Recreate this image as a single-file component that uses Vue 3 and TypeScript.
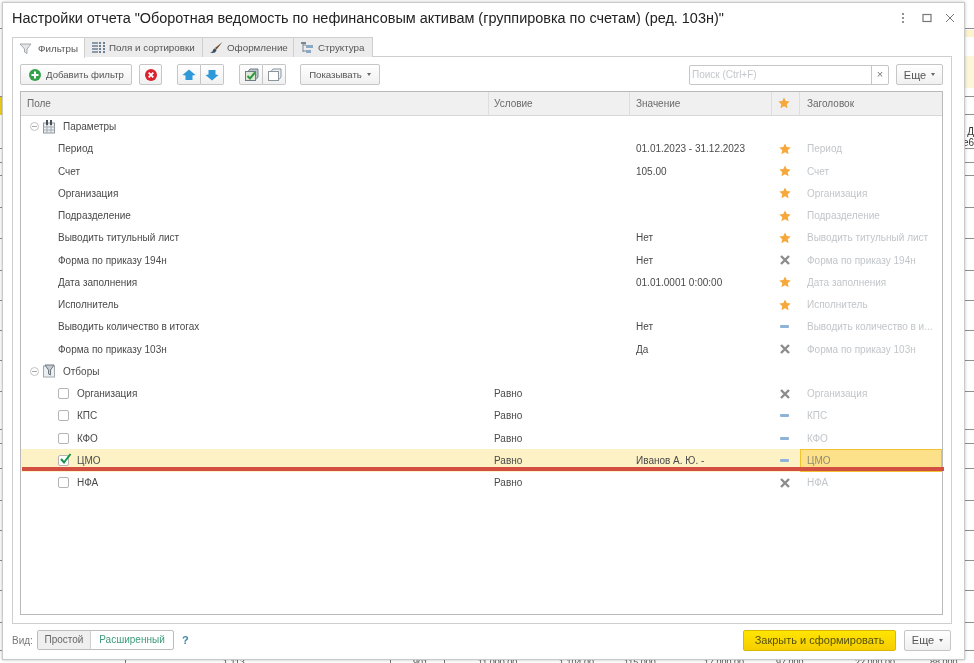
<template>
  <div class="page">
    <!-- report sheet behind the dialog -->
    <div class="sheet" aria-hidden="true">
      <div v-for="l in sheetLines" :key="l" class="sheet-line" :style="{ top: l + 'px' }" />
      <div v-for="x in sheetCols" :key="x" class="sheet-col" :style="{ left: x + 'px' }" />
      <div class="sheet-yellow" />
      <div class="sheet-strip" />
      <div class="sheet-left" />
      <span class="sheet-a">Д</span>
      <span class="sheet-b">е6</span>
      <span v-for="n in sheetNumbers" :key="n.x" class="sheet-num" :style="{ left: n.x + 'px' }">{{ n.t }}</span>
    </div>

    <div class="dialog">
      <header class="titlebar">
        <h1>Настройки отчета "Оборотная ведомость по нефинансовым активам (группировка по счетам) (ред. 103н)"</h1>
        <div class="win-btns">
          <svg class="dots" width="4" height="12" viewBox="0 0 4 12"><circle cx="2" cy="2" r="1.1" /><circle cx="2" cy="6" r="1.1" /><circle cx="2" cy="10" r="1.1" /></svg>
          <svg width="10" height="10" viewBox="0 0 10 10"><rect x="1" y="1.5" width="8" height="7" fill="none" stroke="#777" stroke-width="1.2" /></svg>
          <svg width="10" height="10" viewBox="0 0 10 10"><path d="M1 1l8 8M9 1l-8 8" stroke="#777" stroke-width="1" /></svg>
        </div>
      </header>

      <nav class="tabs">
        <div class="tab active t1">
          <svg width="13" height="13" viewBox="0 0 13 13"><path d="M1 2h11L8 7v4.5L5.500 10V7z" fill="#e4e6e8" stroke="#a4a8ac" /></svg>
          Фильтры
        </div>
        <div class="tab t2">
          <svg width="14" height="13" viewBox="0 0 14 13"><path d="M1 2h6M1 5h6M1 8h6M1 11h6" stroke="#6b7f95" stroke-width="1.500" /><path d="M9 1v11M13 1v11" stroke="#6b7f95" stroke-dasharray="2 1" stroke-width="2" /></svg>
          Поля и сортировки
        </div>
        <div class="tab t3">
          <svg width="14" height="13" viewBox="0 0 14 13"><path d="M13.500 1 6 7l1.500 1.500z" fill="#6d4a24" /><path d="M6 7.500c-2 0-2 2-2.500 3L1 11.500c3 1 6 .5 6.500-2.500z" fill="#3d4f63" /></svg>
          Оформление
        </div>
        <div class="tab t4">
          <svg width="14" height="13" viewBox="0 0 14 13"><path d="M3 1v10M3 4h3M3 10h3" stroke="#7a8794" fill="none" /><rect x="1" y="1" width="5" height="2" fill="#7a8794" /><rect x="6" y="4" width="7" height="3" fill="#8aa9c4" /><rect x="6" y="9" width="5" height="3" fill="#8aa9c4" /></svg>
          Структура
        </div>
      </nav>

      <section class="panel">
        <div class="toolbar">
          <button class="btn add">
            <svg width="14" height="14" viewBox="0 0 14 14"><circle cx="7" cy="7" r="6" fill="#35a04a" /><path d="M7 3.500v7M3.500 7h7" stroke="#fff" stroke-width="2" /></svg>
            Добавить фильтр
          </button>
          <button class="btn icon del">
            <svg width="14" height="14" viewBox="0 0 14 14"><circle cx="7" cy="7" r="6" fill="#d8232f" /><path d="m4.700 4.700 4.600 4.600M9.300 4.700l-4.600 4.600" stroke="#fff" stroke-width="1.800" /></svg>
          </button>
          <div class="group move">
            <button class="btn icon">
              <svg width="14" height="12" viewBox="0 0 14 12"><path d="M7 .5 13.500 6 10.500 6.500V11h-7V6.500L.5 6z" fill="#2f98d8" /></svg>
            </button>
            <button class="btn icon">
              <svg width="14" height="12" viewBox="0 0 14 12"><path d="M7 11.500 13.500 6 10.500 5.500V1h-7v4.500L.5 6z" fill="#2f98d8" /></svg>
            </button>
          </div>
          <div class="group checks">
            <button class="btn icon">
              <svg width="15" height="14" viewBox="0 0 15 14"><path d="M4 3.500 6 1h8v8l-2 2.500" fill="#b8c2c8" stroke="#77838b" /><rect x="1.500" y="3.500" width="10" height="9" fill="#dfe7d8" stroke="#6f7c84" /><path d="m3.500 8 2.500 2.500 5-6" fill="none" stroke="#2f9a3c" stroke-width="2" /></svg>
            </button>
            <button class="btn icon">
              <svg width="15" height="14" viewBox="0 0 15 14"><path d="M4 3.500 6 1h8v8l-2 2.500" fill="#eef0f1" stroke="#8b959c" /><rect x="1.500" y="3.500" width="10" height="9" fill="#fff" stroke="#8b959c" /></svg>
            </button>
          </div>
          <button class="btn show">Показывать <i class="caret" /></button>
          <div class="search">
            <span class="search-input">Поиск (Ctrl+F)</span>
            <span class="search-clear">×</span>
          </div>
          <button class="btn more">Еще <i class="caret" /></button>
        </div>

        <div class="table">
          <div class="row head">
            <div class="c-field">Поле</div>
            <div class="c-cond">Условие</div>
            <div class="c-val">Значение</div>
            <div class="c-star"><svg class="star" viewBox="0 0 12 12"><path :d="starPath" /></svg></div>
            <div class="c-title">Заголовок</div>
          </div>

          <div class="row">
            <div class="c-field group-cell">
              <i class="collapse" />
              <svg width="14" height="14" viewBox="0 0 14 14"><rect x="1.500" y="3" width="11" height="10" fill="#eceff1" stroke="#8f979e" /><path d="M5 3v10M9 3v10M1.500 7h11M1.500 10h11" stroke="#a5acb2" /><path d="M5 0v5M9 0v5" stroke="#47525c" stroke-width="2" /></svg>
              <span>Параметры</span>
            </div>
          </div>
          <div v-for="p in params" :key="p.name" class="row">
            <div class="c-field param">{{ p.name }}</div>
            <div class="c-cond" />
            <div class="c-val">{{ p.value }}</div>
            <div class="c-star">
              <svg v-if="p.mark === 'star'" class="star" viewBox="0 0 12 12"><path :d="starPath" /></svg>
              <svg v-else-if="p.mark === 'x'" class="cross" viewBox="0 0 10 10"><path d="m1 1 8 8M9 1 1 9" /></svg>
              <i v-else class="dash" />
            </div>
            <div class="c-title dim">{{ p.title || p.name }}</div>
          </div>

          <div class="row">
            <div class="c-field group-cell">
              <i class="collapse" />
              <svg width="14" height="14" viewBox="0 0 14 14"><rect x="1.500" y="2" width="11" height="11" fill="#eceff1" stroke="#a0a7ad" /><path d="M3 1h9L8.500 6v5L6.500 10V6z" fill="#c6ccd1" stroke="#6f7982" /></svg>
              <span>Отборы</span>
            </div>
          </div>
          <div v-for="f in filters" :key="f.name" class="row" :class="{ selected: f.on }">
            <div class="c-field filter">
              <span class="check">
                <svg v-if="f.on" width="13" height="12" viewBox="0 0 13 12"><path d="m2 6 3 3.500L11.500 1" fill="none" stroke="#139447" stroke-width="2" /></svg>
              </span>
              {{ f.name }}
            </div>
            <div class="c-cond">Равно</div>
            <div class="c-val">{{ f.value }}</div>
            <div class="c-star">
              <svg v-if="f.mark === 'x'" class="cross" viewBox="0 0 10 10"><path d="m1 1 8 8M9 1 1 9" /></svg>
              <i v-else class="dash" />
            </div>
            <div class="c-title dim" :class="{ current: f.on }">{{ f.name }}</div>
          </div>
          <div class="red-mark" />
        </div>
      </section>

      <footer class="footer">
        <span class="vid">Вид:</span>
        <div class="switch">
          <span class="sw-off">Простой</span>
          <span class="sw-on">Расширенный</span>
        </div>
        <span class="help">?</span>
        <button class="btn primary">Закрыть и сформировать</button>
        <button class="btn more">Еще <i class="caret" /></button>
      </footer>
    </div>
  </div>
</template>

<script setup lang="ts">
type Mark = 'star' | 'x' | 'dash'

const starPath = 'M6 .4l1.700 3.700 4 .4-3 2.700.9 4L6 9.200 2.400 11.200l.9-4-3-2.700 4-.4z'

const params: { name: string; value: string; mark: Mark; title?: string }[] = [
  { name: 'Период', value: '01.01.2023 - 31.12.2023', mark: 'star' },
  { name: 'Счет', value: '105.00', mark: 'star' },
  { name: 'Организация', value: '', mark: 'star' },
  { name: 'Подразделение', value: '', mark: 'star' },
  { name: 'Выводить титульный лист', value: 'Нет', mark: 'star' },
  { name: 'Форма по приказу 194н', value: 'Нет', mark: 'x' },
  { name: 'Дата заполнения', value: '01.01.0001 0:00:00', mark: 'star' },
  { name: 'Исполнитель', value: '', mark: 'star' },
  { name: 'Выводить количество в итогах', value: 'Нет', mark: 'dash', title: 'Выводить количество в и...' },
  { name: 'Форма по приказу 103н', value: 'Да', mark: 'x' },
]

const filters: { name: string; value: string; mark: Mark; on?: boolean }[] = [
  { name: 'Организация', value: '', mark: 'x' },
  { name: 'КПС', value: '', mark: 'dash' },
  { name: 'КФО', value: '', mark: 'dash' },
  { name: 'ЦМО', value: 'Иванов А. Ю. -', mark: 'dash', on: true },
  { name: 'НФА', value: '', mark: 'x' },
]

const sheetLines = [28, 96, 114, 148, 162, 175, 207, 238, 270, 300, 330, 360, 391, 429, 443, 468, 500, 530, 560, 590, 622, 650]
const sheetCols = [125, 390, 444]
const sheetNumbers = [
  { x: 223, t: '1 113' },
  { x: 413, t: '901' },
  { x: 478, t: '11 000,00' },
  { x: 559, t: '1 104,00' },
  { x: 624, t: '115 000' },
  { x: 704, t: '17 000,00' },
  { x: 776, t: '97 000' },
  { x: 855, t: '22 000,00' },
  { x: 930, t: '88 000' },
]
</script>

<style>
html, body { margin: 0; background: #fff; }
</style>

<style scoped>
.page {
  position: relative;
  width: 974px;
  height: 663px;
  overflow: hidden;
  background: #fff;
  font-family: "Liberation Sans", Arial, sans-serif;
  font-size: 10px;
  color: #4a4a4a;
  filter: blur(0.35px);
}

/* ── sheet behind ── */
.sheet { position: absolute; inset: 0; }
.sheet-line { position: absolute; left: 0; right: 0; height: 1px; background: #8f8f8f; }
.sheet-col { position: absolute; top: 640px; bottom: 0; width: 1px; background: #777; }
.sheet-yellow { position: absolute; right: 0; top: 56px; width: 12px; height: 32px; background: #fdf6d8; }
.sheet-strip { position: absolute; right: 0; top: 30px; width: 12px; height: 7px; background: #fdf3cf; }
.sheet-left { position: absolute; left: 0; top: 97px; width: 3px; height: 18px; background: #f2d21a; }
.sheet-a { position: absolute; right: 0; top: 126px; font-size: 10px; line-height: 11px; color: #333; }
.sheet-b { position: absolute; right: 0; top: 138px; font-size: 10px; line-height: 10px; color: #333; }
.sheet-num { position: absolute; top: 657px; font-size: 9px; color: #555; }

/* ── dialog ── */
.dialog {
  position: absolute;
  left: 2px;
  top: 2px;
  width: 963px;
  height: 658px;
  box-sizing: border-box;
  background: #fff;
  border: 1px solid #c9c9c9;
  box-shadow: 0 0 3px rgba(0, 0, 0, .25);
  display: flex;
  flex-direction: column;
  padding: 0 9px;
}

.titlebar {
  height: 30px;
  display: flex;
  align-items: center;
  justify-content: space-between;
  flex: none;
}
.titlebar h1 {
  margin: 0;
  font-size: 14.450px;
  font-weight: 400;
  color: #222;
  white-space: nowrap;
}
.win-btns {
  display: flex;
  align-items: center;
  gap: 13px;
}
.win-btns svg { fill: #777; display: block; }
.win-btns .dots { margin-right: 4px; }

/* ── tabs ── */
.tabs {
  display: flex;
  flex: none;
  height: 20px;
  margin-top: 4px;
  position: relative;
  z-index: 1;
}
.tab {
  box-sizing: border-box;
  display: flex;
  align-items: center;
  gap: 4px;
  padding-left: 6px;
  border: 1px solid #cfcfcf;
  border-bottom: none;
  border-left: none;
  background: #ececec;
  color: #555;
  font-size: 9.800px;
  white-space: nowrap;
}
.t1 { width: 73px; }
.t2 { width: 118px; }
.t3 { width: 91px; }
.t4 { width: 79px; }
.tab.active {
  background: #fff;
  border-left: 1px solid #cfcfcf;
  height: 21px;
  gap: 6px;
}

/* ── panel ── */
.panel {
  flex: none;
  box-sizing: border-box;
  width: 940px;
  height: 568px;
  margin-top: -1px;
  border: 1px solid #cfcfcf;
  padding: 7px 8px 8px 7px;
  display: flex;
  flex-direction: column;
  gap: 6px;
}
.toolbar {
  display: flex;
  align-items: center;
  height: 21px;
  flex: none;
}
.btn {
  box-sizing: border-box;
  height: 21px;
  border: 1px solid #c6c6c6;
  border-radius: 2px;
  background: linear-gradient(#fff, #f0f0f0);
  font: inherit;
  font-size: 9.600px;
  color: #555;
  display: inline-flex;
  align-items: center;
  justify-content: center;
  padding: 0;
}
.btn.add { width: 112px; gap: 4px; }
.btn.icon { width: 23px; }
.btn.del { margin-left: 7px; }
.group { display: flex; }
.group .btn { border-radius: 0; width: 24px; }
.group .btn + .btn { border-left: none; width: 23px; }
.group .btn:first-child { border-radius: 2px 0 0 2px; }
.group .btn:last-child { border-radius: 0 2px 2px 0; }
.group.move { margin-left: 15px; }
.group.checks { margin-left: 15px; }
.btn.show { width: 80px; margin-left: 14px; gap: 5px; }
.btn.more { width: 47px; gap: 5px; font-size: 11px; }
.caret {
  width: 0;
  height: 0;
  border-left: 2.500px solid transparent;
  border-right: 2.500px solid transparent;
  border-top: 3px solid #666;
}
.search {
  margin-left: auto;
  margin-right: 7px;
  width: 200px;
  height: 20px;
  box-sizing: border-box;
  border: 1px solid #c6c6c6;
  border-radius: 2px;
  display: flex;
}
.search-input {
  flex: 1;
  padding-left: 2px;
  line-height: 18px;
  color: #c4c8cc;
  border-right: 1px solid #c6c6c6;
}
.search-clear {
  width: 16px;
  text-align: center;
  line-height: 17px;
  color: #777;
  font-size: 11px;
}

/* ── table ── */
.table {
  position: relative;
  flex: 1;
  min-height: 0;
  border: 1px solid #b9b9b9;
  display: flex;
  flex-direction: column;
}
.row {
  display: grid;
  grid-template-columns: 468px 141px 142px 28px 1fr;
  height: 22.250px;
  flex: none;
  align-items: center;
}
.row.head {
  height: 23.500px;
  background: #f0f0f0;
  border-bottom: 1px solid #d8d8d8;
  box-sizing: border-box;
  color: #6a6a6a;
}
.row.head > div {
  height: 100%;
  display: flex;
  align-items: center;
  border-right: 1px solid #dedede;
  box-sizing: border-box;
}
.row.head > div:last-child { border-right: none; }
.c-field { padding-left: 6px; white-space: nowrap; }
.c-cond { padding-left: 5px; }
.c-val { padding-left: 6px; white-space: nowrap; }
.c-star {
  display: flex;
  align-items: center;
  justify-content: center;
  height: 100%;
  padding-right: 3px;
}
.c-title { padding-left: 7px; white-space: nowrap; overflow: hidden; }
.dim { color: #c2c6ca; }
.group-cell {
  grid-column: 1 / -1;
  display: flex;
  align-items: center;
  padding-left: 9px;
}
.group-cell svg { margin-left: 3px; }
.group-cell span { margin-left: 7px; }
.collapse {
  width: 7px;
  height: 7px;
  border-radius: 50%;
  border: 1px solid #c3c3c3;
  position: relative;
}
.collapse::after {
  content: "";
  position: absolute;
  left: 1px;
  right: 1px;
  top: 3px;
  height: 1px;
  background: #aaa;
}
.param { padding-left: 37px; }
.filter {
  display: flex;
  align-items: center;
  gap: 8px;
  padding-left: 37px;
}
.check {
  position: relative;
  width: 11px;
  height: 11px;
  box-sizing: border-box;
  border: 1px solid #b4b4b4;
  border-radius: 2px;
  background: #fff;
}
.check svg { position: absolute; left: 0; top: -3px; }
.star { width: 12px; height: 12px; fill: #f7a83a; }
.cross { width: 10px; height: 10px; stroke: #8c8c8c; stroke-width: 2.400; fill: none; }
.dash { width: 9px; height: 3px; border-radius: 1px; background: #8fb3d6; }
.row.selected { background: #fdf1c6; }
.c-title.current {
  height: 100%;
  box-sizing: border-box;
  border: 1px solid #f2c230;
  background: #fde08a;
  color: #8f8a70;
  display: flex;
  align-items: center;
  padding-left: 6px;
}
.red-mark {
  position: absolute;
  left: 1px;
  right: -2px;
  top: 375px;
  height: 4px;
  background: #d34f42;
}

/* ── footer ── */
.footer {
  flex: 1;
  display: flex;
  align-items: center;
  padding: 0 4px 3px 0;
}
.vid { margin-right: 4px; color: #777; font-size: 10px; width: 21px; }
.switch {
  display: flex;
  height: 20px;
  box-sizing: border-box;
  border: 1px solid #bcbcbc;
  border-radius: 2px;
  line-height: 18px;
}
.sw-off {
  width: 52px;
  text-align: center;
  background: #efefef;
  border-right: 1px solid #d0d0d0;
  color: #666;
}
.sw-on { width: 82px; text-align: center; color: #3f9a7a; }
.help { margin-left: 8px; font-weight: 700; font-size: 11px; color: #3f87ac; }
.btn.primary {
  margin-left: auto;
  margin-right: 8px;
  width: 153px;
  height: 21px;
  border-color: #d9b900;
  background: linear-gradient(#ffe500, #f6cd00);
  color: #55500f;
  font-size: 11px;
}
</style>
